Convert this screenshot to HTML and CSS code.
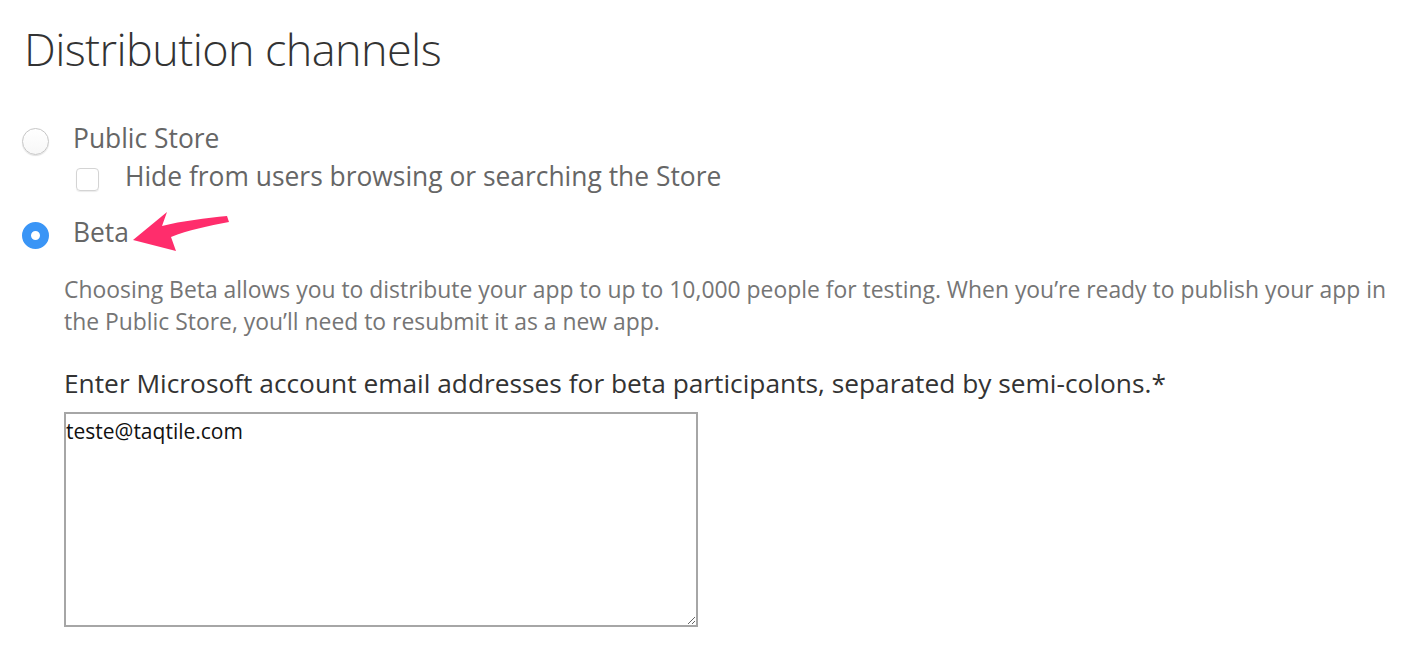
FILE: index.html
```html
<!DOCTYPE html>
<html>
<head>
<meta charset="utf-8">
<link rel="stylesheet" href="styles.css">
</head>
<body>
<main class="page">
  <h1 class="title">Distribution channels</h1>
  <div class="options">
    <div class="option">
      <span class="radio"></span>
      <span class="option-label">Public Store</span>
    </div>
    <div class="suboption">
      <span class="checkbox"></span>
      <span class="suboption-label">Hide from users browsing or searching the Store</span>
    </div>
    <div class="option option-beta">
      <span class="radio radio-on"></span>
      <span class="option-label">Beta</span>
      <svg class="arrow" width="110" height="50" viewBox="0 0 110 50">
        <path d="M3 33 L37 5 L32 19 C52 14 76 11 97 9 L99 15 C78 19 58 23 41 30 L46 44 Z" fill="#ff2d6c"/>
      </svg>
    </div>
  </div>
  <section class="beta-panel">
    <p class="desc">Choosing Beta allows you to distribute your app to up to 10,000 people for testing. When you’re ready to publish your app in the Public Store, you’ll need to resubmit it as a new app.</p>
    <label class="field-label">Enter Microsoft account email addresses for beta participants, separated by semi-colons.*</label>
    <textarea class="emails">teste@taqtile.com</textarea>
  </section>
</main>
</body>
</html>
```
FILE: styles.css
```css
html, body {
  margin: 0;
  padding: 0;
  background: #ffffff;
}
body {
  font-family: "Open Sans", "Noto Sans", sans-serif;
  color: #666666;
}
.page {
  padding: 21px 0 0 22px;
}
.title {
  margin: 0 0 0 2px;
  font-family: "Open Sans", sans-serif;
  font-weight: 300;
  font-size: 45px;
  line-height: 56px;
  color: #333333;
  letter-spacing: -0.6px;
}
.options {
  margin-top: 45px;
}
.option {
  display: flex;
  align-items: flex-start;
  height: 32px;
  position: relative;
}
.radio {
  width: 27px;
  height: 27px;
  margin-top: 6px;
  border-radius: 50%;
  border: 1px solid #c6c6c6;
  box-shadow: 0 1px 1px rgba(0,0,0,0.12);
  box-sizing: border-box;
  background: linear-gradient(#ffffff, #f7f7f7);
  margin-right: 24px;
  flex: none;
}
.radio-on {
  border: 9.5px solid #3a95f6;
  background: #ffffff;
  box-shadow: none;
}
.option-label {
  font-size: 26.4px;
  line-height: 32px;
  color: #666666;
}
.suboption {
  display: flex;
  align-items: flex-start;
  height: 32px;
  margin: 6px 0 0 54px;
}
.checkbox {
  width: 23px;
  height: 23px;
  margin-top: 8px;
  box-sizing: border-box;
  border: 1px solid #d4d4d4;
  border-radius: 4px;
  box-shadow: 0 1px 1px rgba(0,0,0,0.08);
  margin-right: 26px;
  flex: none;
}
.suboption-label {
  font-size: 26.4px;
  line-height: 32px;
  color: #666666;
}
.option-beta {
  margin-top: 24px;
}
.arrow {
  position: absolute;
  left: 108px;
  top: -9px;
}
.beta-panel {
  padding-left: 42px;
  margin-top: 26px;
}
.desc {
  margin: 0;
  font-size: 22.9px;
  line-height: 32px;
  color: #757575;
}
.field-label {
  display: block;
  margin-top: 29px;
  font-size: 26.3px;
  line-height: 32px;
  color: #333333;
}
.emails {
  display: block;
  margin-top: 13px;
  width: 634px;
  height: 215px;
  box-sizing: border-box;
  border: 2px solid #a6a6a6;
  padding: 3px 0 0 0;
  font-family: "Open Sans", sans-serif;
  font-size: 21px;
  line-height: 28px;
  color: #111;
  resize: both;
}
```
